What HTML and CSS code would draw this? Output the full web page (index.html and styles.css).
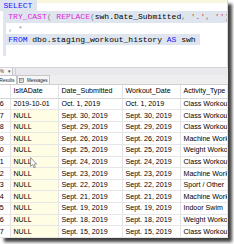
FILE: index.html
```html
<!DOCTYPE html>
<html lang="en">
<head>
<meta charset="utf-8">
<title>SSMS query</title>
<link rel="stylesheet" href="styles.css">
</head>
<body>
<div class="window">
  <div class="editor">
    <div class="line l1"><span class="sel sel-first"><span class="kw">SELECT</span> </span></div>
    <div class="line"><span class="sel sel-line"> <span class="fn">TRY_CAST</span><span class="op">(</span> <span class="fn">REPLACE</span><span class="op">(</span>swh.Date_Submitted<span class="op">,</span> <span class="str">'.'</span><span class="op">,</span> <span class="str">''</span><span class="op">))</span> </span></div>
    <div class="line edge"> <span class="dim">,</span> <span class="dim star">*</span></div>
    <div class="line"><span class="sel sel-line"> <span class="kw">FROM</span> dbo.staging_workout_history <span class="kw">AS</span> swh </span></div>
    <div class="line edge"></div>
  </div>
  <div class="zoombar">
    <div class="zoombox"><div class="zoomclip">100 %</div><span class="caret">▾</span></div>
    <div class="hsep"></div>
  </div>
  <div class="tabs">
    <div class="tab tab-results"><span>Results</span></div>
    <div class="tab tab-messages">
      <svg class="msgicon" width="5" height="5" viewBox="0 0 5 5"><rect x="0.4" y="0.6" width="4.2" height="3.8" fill="#fff" stroke="#5a5a5a" stroke-width="0.6"/><path d="M1.2 1.8H3.8M1.2 3H3.2" stroke="#5a5a5a" stroke-width="0.5"/></svg>
      <span>Messages</span>
    </div>
  </div>
  <div class="grid">
    <div class="row head"><div class="c rn"></div><div class="c">IsItADate</div><div class="c">Date_Submitted</div><div class="c">Workout_Date</div><div class="c">Activity_Type</div></div>
    <div class="row"><div class="c rn">16</div><div class="c">2019-10-01</div><div class="c">Oct. 1, 2019</div><div class="c">Oct. 1, 2019</div><div class="c">Class Workout</div></div>
    <div class="row"><div class="c rn">17</div><div class="c null">NULL</div><div class="c">Sept. 30, 2019</div><div class="c">Sept. 30, 2019</div><div class="c">Class Workout</div></div>
    <div class="row"><div class="c rn">18</div><div class="c null">NULL</div><div class="c">Sept. 29, 2019</div><div class="c">Sept. 29, 2019</div><div class="c">Class Workout</div></div>
    <div class="row"><div class="c rn">19</div><div class="c null">NULL</div><div class="c">Sept. 26, 2019</div><div class="c">Sept. 26, 2019</div><div class="c">Machine Workout</div></div>
    <div class="row"><div class="c rn">20</div><div class="c null">NULL</div><div class="c">Sept. 25, 2019</div><div class="c">Sept. 25, 2019</div><div class="c">Weight Workout</div></div>
    <div class="row"><div class="c rn">21</div><div class="c null">NULL</div><div class="c">Sept. 24, 2019</div><div class="c">Sept. 24, 2019</div><div class="c">Class Workout</div></div>
    <div class="row"><div class="c rn">22</div><div class="c null">NULL</div><div class="c">Sept. 23, 2019</div><div class="c">Sept. 23, 2019</div><div class="c">Machine Workout</div></div>
    <div class="row"><div class="c rn">23</div><div class="c null">NULL</div><div class="c">Sept. 22, 2019</div><div class="c">Sept. 22, 2019</div><div class="c">Sport / Other</div></div>
    <div class="row"><div class="c rn">24</div><div class="c null">NULL</div><div class="c">Sept. 21, 2019</div><div class="c">Sept. 21, 2019</div><div class="c">Machine Workout</div></div>
    <div class="row"><div class="c rn">25</div><div class="c null">NULL</div><div class="c">Sept. 19, 2019</div><div class="c">Sept. 19, 2019</div><div class="c">Indoor Swim</div></div>
    <div class="row"><div class="c rn">26</div><div class="c null">NULL</div><div class="c">Sept. 18, 2019</div><div class="c">Sept. 18, 2019</div><div class="c">Weight Workout</div></div>
    <div class="row"><div class="c rn">27</div><div class="c null">NULL</div><div class="c">Sept. 15, 2019</div><div class="c">Sept. 15, 2019</div><div class="c">Class Workout</div></div>
    <svg class="cursor" width="7" height="12" viewBox="0 0 7 12"><path d="M0.6 0.6V9.4L2.6 7.6L4 10.9L5.4 10.3L4.1 7.1H6.6Z" fill="#fff" stroke="#6a6a6a" stroke-width="0.7" stroke-linejoin="round"/></svg>
  </div>
</div>
</body>
</html>
```

FILE: styles.css
```css
* { box-sizing: border-box; }
html, body { margin: 0; padding: 0; background: #fff; }
body {
  width: 234px;
  height: 244px;
  overflow: hidden;
  font-family: "Liberation Sans", Arial, sans-serif;
}
.window {
  width: 228px;
  height: 238px;
  background: #fff;
  box-shadow: 4px 4px 3px rgba(0, 0, 0, 0.75);
  display: flex;
  flex-direction: column;
  overflow: hidden;
}

/* editor */
.editor {
  height: 67px;
  flex: none;
  border-right: 1px solid #d6d6d6;
  overflow: hidden;
  font-family: "Liberation Mono", "DejaVu Sans Mono", monospace;
  font-size: 8px;
  color: #000;
}
.line {
  height: 11.3px;
  line-height: 11.3px;
  padding-left: 3.5px;
  white-space: pre;
}
.l1 { background: linear-gradient(#fbf7df 0 3.5px, transparent 3.5px); }
.sel {
  display: inline-block;
  height: 11.3px;
  vertical-align: top;
  background: #dfe5ee;
}
.sel-first { margin-left: -3.5px; padding-left: 3.5px; }
.sel-line { margin-left: -0.5px; padding-left: 0.5px; }
.edge {
  background: linear-gradient(to right, transparent 3px, #dfe5ee 3px, #dfe5ee 5.5px, transparent 5.5px);
}
.kw { color: #1616ff; }
.fn { color: #e01ee0; }
.op { color: #808080; }
.str { color: #e4202a; }
.dim { color: #9a9a9a; }
.star {
  text-decoration: underline dotted #6f9c6f;
  text-underline-offset: 3px;
}

/* zoom bar */
.zoombar {
  height: 8px;
  flex: none;
  display: flex;
  background: #e9e9ed;
  border-top: 1px solid #d4d4d8;
}
.zoombox {
  width: 13px;
  display: flex;
  align-items: center;
  background: #f7f7f7;
  border-right: 1px solid #c4c4c4;
  font-size: 4.5px;
  color: #333;
}
.zoomclip {
  width: 4px;
  display: flex;
  justify-content: flex-end;
  overflow: hidden;
  white-space: nowrap;
}
.caret {
  margin-left: 4px;
  font-size: 5px;
  line-height: 1;
  color: #444;
}
.hsep {
  width: 1px;
  margin-left: 2px;
  background: #d0d0d4;
}

/* tabs */
.tabs {
  height: 10px;
  flex: none;
  display: flex;
  align-items: flex-end;
  background: #eeeef0;
  border-bottom: 1px solid #cfcfcf;
  font-size: 4.5px;
  color: #222;
}
.tab {
  height: 9px;
  display: flex;
  align-items: center;
  white-space: nowrap;
  border: 1px solid #c6c6c6;
  border-bottom: none;
  background: #f6f6f6;
}
.tab-results {
  width: 17px;
  justify-content: flex-end;
  overflow: hidden;
  padding-right: 1.5px;
  border-left: none;
  background: #fff;
}
.tab-messages {
  padding: 0 1.5px 0 1px;
  gap: 3px;
}
.msgicon { display: block; flex: none; }

/* grid */
.grid {
  flex: 1;
  position: relative;
  overflow: hidden;
  font-size: 7.1px;
  color: #000;
}
.row {
  display: grid;
  grid-template-columns: 11px 48px 64px 58px 47px;
  height: 11.6px;
  border-bottom: 1px solid #e6e6e6;
}
.row.head { height: 13.7px; border-bottom-color: #d8d8d8; }
.c {
  display: flex;
  align-items: center;
  padding-left: 2.5px;
  white-space: nowrap;
  overflow: hidden;
  border-right: 1px solid #e3e3e3;
}
.rn {
  padding-left: 0;
  padding-right: 6.3px;
  justify-content: flex-end;
}
.null { background: #fffde3; }
.cursor {
  position: absolute;
  left: 30px;
  top: 72px;
}
```
